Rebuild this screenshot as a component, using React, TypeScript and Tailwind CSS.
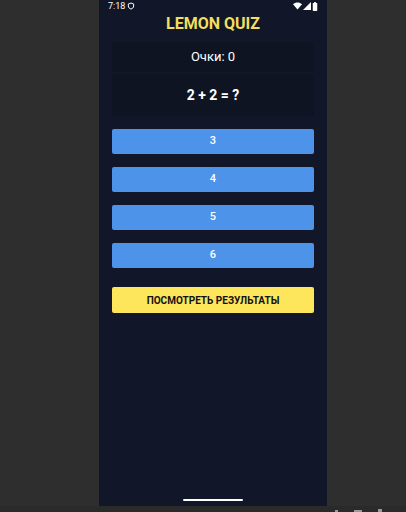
export default function App() {
  const answers = ["3", "4", "5", "6"];
  return (
    <div
      className="flex h-[512px] w-[406px] flex-col bg-[#2e2e2e]"
      style={{ fontFamily: "Roboto, 'Liberation Sans', sans-serif" }}
    >
      <div className="flex h-[506px] justify-center pl-[99px] pr-[79px]">
        <div className="relative flex w-[228px] flex-col bg-[#111729]">
          {/* status bar */}
          <div className="flex h-[12px] items-center justify-between px-[9px] text-[9px] leading-none text-white">
            <div className="flex items-center gap-[2px]">
              <span>7:18</span>
              <svg width="8" height="8" viewBox="0 0 24 24" fill="none" stroke="white" strokeWidth="3">
                <path d="M12 3 L20 6 V12 C20 17 16 20 12 21 C8 20 4 17 4 12 V6 Z" />
              </svg>
            </div>
            <div className="flex items-center gap-[1px]">
              <svg width="9" height="8" viewBox="0 0 24 20" fill="white">
                <path d="M12 19 L0 5 C7 -1 17 -1 24 5 Z" />
              </svg>
              <svg width="8" height="8" viewBox="0 0 20 20" fill="white">
                <path d="M20 0 V20 H0 Z" />
              </svg>
              <svg width="6" height="9" viewBox="0 0 12 20" fill="white">
                <rect x="1" y="2" width="10" height="18" rx="1.5" />
                <rect x="4" y="0" width="4" height="3" />
              </svg>
            </div>
          </div>
          <div className="mt-[2px] text-center text-[16px] font-bold leading-[20px] text-[#f3df5b]">
            LEMON QUIZ
          </div>
          <div className="mx-[13px] mt-[8px] flex h-[30px] items-center justify-center bg-[#0f1422] text-[13px] text-white">
            Очки: 0
          </div>
          <div className="mx-[13px] mt-[2px] flex h-[42px] items-center justify-center bg-[#0f1422] text-[14px] font-bold text-white">
            2 + 2 = ?
          </div>
          <div className="mx-[13px] mt-[13px] flex flex-col gap-[13px]">
            {answers.map((a) => (
              <div
                key={a}
                className="flex h-[25px] items-center justify-center rounded-[2px] bg-[#4d93ea] text-[11px] font-medium text-white"
              >
                {a}
              </div>
            ))}
          </div>
          <div className="mx-[13px] mt-[19px] flex h-[26px] items-center justify-center rounded-[2px] bg-[#fde55c] text-[10px] font-bold text-[#111]">
            ПОСМОТРЕТЬ РЕЗУЛЬТАТЫ
          </div>
          <div className="absolute bottom-[5px] left-[84px] h-[2px] w-[60px] rounded-full bg-white" />
        </div>
      </div>
      <div className="flex h-[6px] items-start justify-end gap-[16px] bg-[#2a2a2a] pr-[24px]">
        <div className="mt-[4px] h-[2px] w-[3px] bg-[#9a9a9a]" />
        <div className="mt-[4px] h-[2px] w-[8px] bg-[#9a9a9a]" />
        <div className="mt-[3px] h-[3px] w-[4px] bg-[#9a9a9a]" />
      </div>
    </div>
  );
}
